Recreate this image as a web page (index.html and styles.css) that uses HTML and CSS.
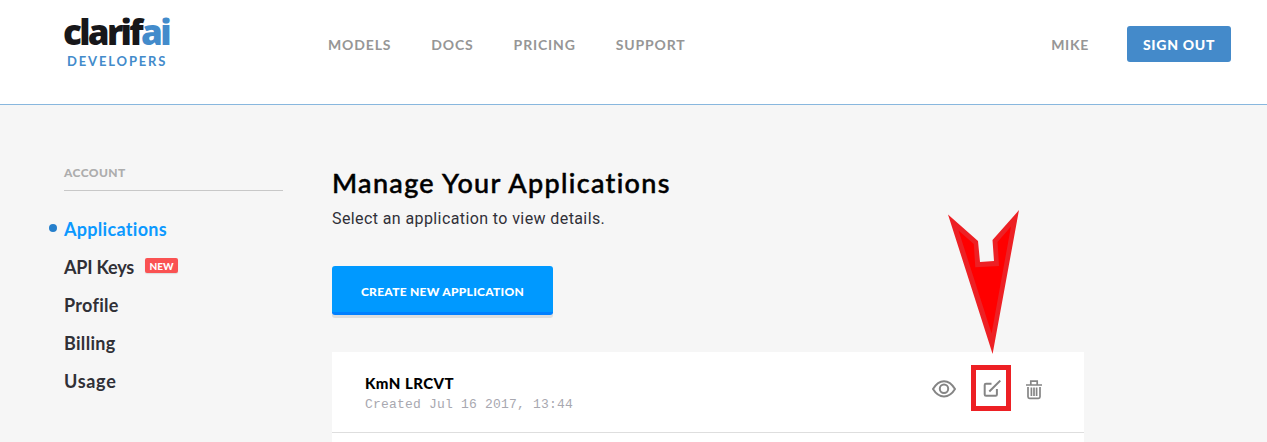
FILE: index.html
```
<!DOCTYPE html>
<html lang="en">
<head>
<meta charset="utf-8">
<title>Clarifai Developers</title>
<link rel="stylesheet" href="styles.css">
</head>
<body>
<header class="topbar">
  <a class="logo"><span class="logo-word">clarif<b>ai</b></span><span class="logo-sub">DEVELOPERS</span></a>
  <nav class="topnav"><a>MODELS</a><a>DOCS</a><a>PRICING</a><a>SUPPORT</a></nav>
  <div class="user"><a class="user-name">MIKE</a><a class="signout">SIGN OUT</a></div>
</header>
<div class="content">
  <aside class="sidebar">
    <h2 class="side-title">ACCOUNT</h2>
    <ul class="side-list">
      <li class="active"><span>Applications</span></li>
      <li><span class="tight">API Keys</span><em class="badge">NEW</em></li>
      <li><span>Profile</span></li>
      <li><span>Billing</span></li>
      <li><span class="wide">Usage</span></li>
    </ul>
  </aside>
  <main class="main">
    <h1 class="title">Manage Your Applications</h1>
    <p class="lead">Select an application to view details.</p>
    <a class="create">CREATE NEW APPLICATION</a>
    <section class="apps">
      <div class="row">
        <div class="info"><div class="app-name">KmN LRCVT</div><div class="app-date">Created Jul 16 2017, 13:44</div></div>
        <div class="actions">
          <svg class="eye" width="24" height="18" viewBox="0 0 24 18"><path d="M1 9C4 4 7.700 1.200 12 1.200S20 4 23 9C20 14 16.300 16.400 12 16.400S4 14 1 9Z"/><circle cx="12" cy="8.800" r="4.200"/></svg>
          <span class="edit"><svg width="18" height="18" viewBox="0 0 18 18"><path d="M8.500 3.800H3Q1.700 3.800 1.700 5.100V14.500Q1.700 15.800 3 15.800H12.600Q13.900 15.800 13.900 14.500V9M6.300 11.500L17.300.6"/></svg></span>
          <svg class="trash" width="16" height="20" viewBox="0 0 16 20"><path d="M0 5H16M4.800 4.500V1.200H11.200V4.500M2 7V16.800Q2 18.300 3.500 18.300H12.500Q14 18.300 14 16.800V7M5.400 7.500V16M8 7.500V16M10.600 7.500V16"/></svg>
        </div>
      </div>
      <div class="row-next"></div>
    </section>
  </main>
</div>
<svg class="arrow" width="76" height="148" viewBox="945 208 76 148">
  <path fill="#ed2024" d="M948 214.500L978 241L980 262L994 261L992.500 240L1019 210L992.600 354Z"/>
  <path fill="#f00" d="M958.500 230.500L973.800 244L975.300 267.300L999 266L997.500 242L1011 226.500L991.600 333.500Z"/>
</svg>
</body>
</html>
```

FILE: styles.css
```
* { box-sizing: border-box; }
body { margin: 0; height: 442px; overflow: hidden; background: #f6f6f6; font-family: Lato, "Open Sans", sans-serif; font-variant-ligatures: none; }
.topbar { height: 105px; background: #fff; border-bottom: 1px solid #88b7de; display: flex; align-items: flex-start; padding: 0 36px 0 63px; }
.logo { width: 265px; padding-top: 14px; }
.logo-word { display: block; font: 800 35px/35px "Open Sans", sans-serif; letter-spacing: -2.700px; color: #17171a; }
.logo-word b { font-weight: 800; color: #438bcb; }
.logo-sub { display: block; padding: 4px 0 0 4px; font-size: 13px; line-height: 16px; font-weight: 700; letter-spacing: 1.850px; color: #438bcb; }
.topnav { display: flex; gap: 40px; padding-top: 35px; font-size: 14px; line-height: 20px; font-weight: 700; letter-spacing: .850px; color: #969696; }
.user { margin-left: auto; display: flex; gap: 38px; padding-top: 26px; font-size: 14px; line-height: 38px; font-weight: 700; letter-spacing: .700px; color: #969696; }
.signout { width: 104px; height: 36px; border-radius: 3px; background: #448aca; color: #fff; text-align: center; font-weight: 900; }
.content { display: flex; padding-left: 64px; }
.sidebar { width: 219px; margin-right: 49px; padding-top: 59px; }
.side-title { margin: 0 0 19px; height: 27px; border-bottom: 1px solid #c8c8c8; font-size: 12px; line-height: 18px; font-weight: 900; letter-spacing: .4px; color: #adadad; }
.side-list { list-style: none; margin: 0; padding: 0; font-size: 18px; line-height: 38px; font-weight: 700; letter-spacing: .3px; color: #303036; }
.side-list li { height: 38px; display: flex; }
.tight { letter-spacing: -.2px; }
.wide { letter-spacing: .7px; }
.active { color: #0c99ff; }
.active::before { content: ""; width: 8px; height: 8px; margin: 14px 7px 0 -15px; border-radius: 50%; background: #257fcc; }
.badge { margin: 10px 0 0 11px; width: 33px; height: 15px; border-radius: 2px; background: #fa5252; box-shadow: 0 1px 1px #ddd; color: #fff; font: 900 10px/17px Lato, sans-serif; letter-spacing: 0; text-align: center; }
.main { width: 752px; padding-top: 58px; }
.title { margin: 0; font-size: 27px; line-height: 40px; font-weight: 500; letter-spacing: 1.320px; color: #000; -webkit-text-stroke: .5px; }
.lead { margin: 4px 0 0; font: 400 16px/24px Roboto, sans-serif; letter-spacing: .400px; color: #303038; }
.create { display: block; width: 221px; height: 49px; margin-top: 35px; border-radius: 3px; border-bottom: 3px solid #0080ff; box-shadow: 0 3px 0 #dcdedf; background: #0099ff; color: #fff; text-align: center; font-size: 12px; line-height: 51px; font-weight: 900; letter-spacing: .27px; }
.apps { margin-top: 37px; background: #fff; }
.row { height: 81px; border-bottom: 1px solid #dedede; display: flex; justify-content: space-between; padding: 19px 42px 0 33px; }
.row-next { height: 9px; }
.app-name { font-size: 15px; line-height: 24px; font-weight: 900; letter-spacing: .45px; color: #000; }
.app-date { margin-top: 1px; font: 300 13px/18px "Liberation Mono", monospace; color: #a8a8b0; letter-spacing: .2px; }
.actions { display: flex; align-items: flex-start; }
.actions svg { fill: none; stroke: #858585; stroke-width: 2; }
.eye { margin: 9px 15px 0 0; }
.edit { width: 40px; height: 46px; margin-top: -6px; border: 5px solid #ed2024; padding: 10px 0 0 7px; line-height: 0; }
.actions .trash { margin: 9px 0 0 15px; stroke-width: 1.700; }
.arrow { position: absolute; left: 945px; top: 208px; }
```
